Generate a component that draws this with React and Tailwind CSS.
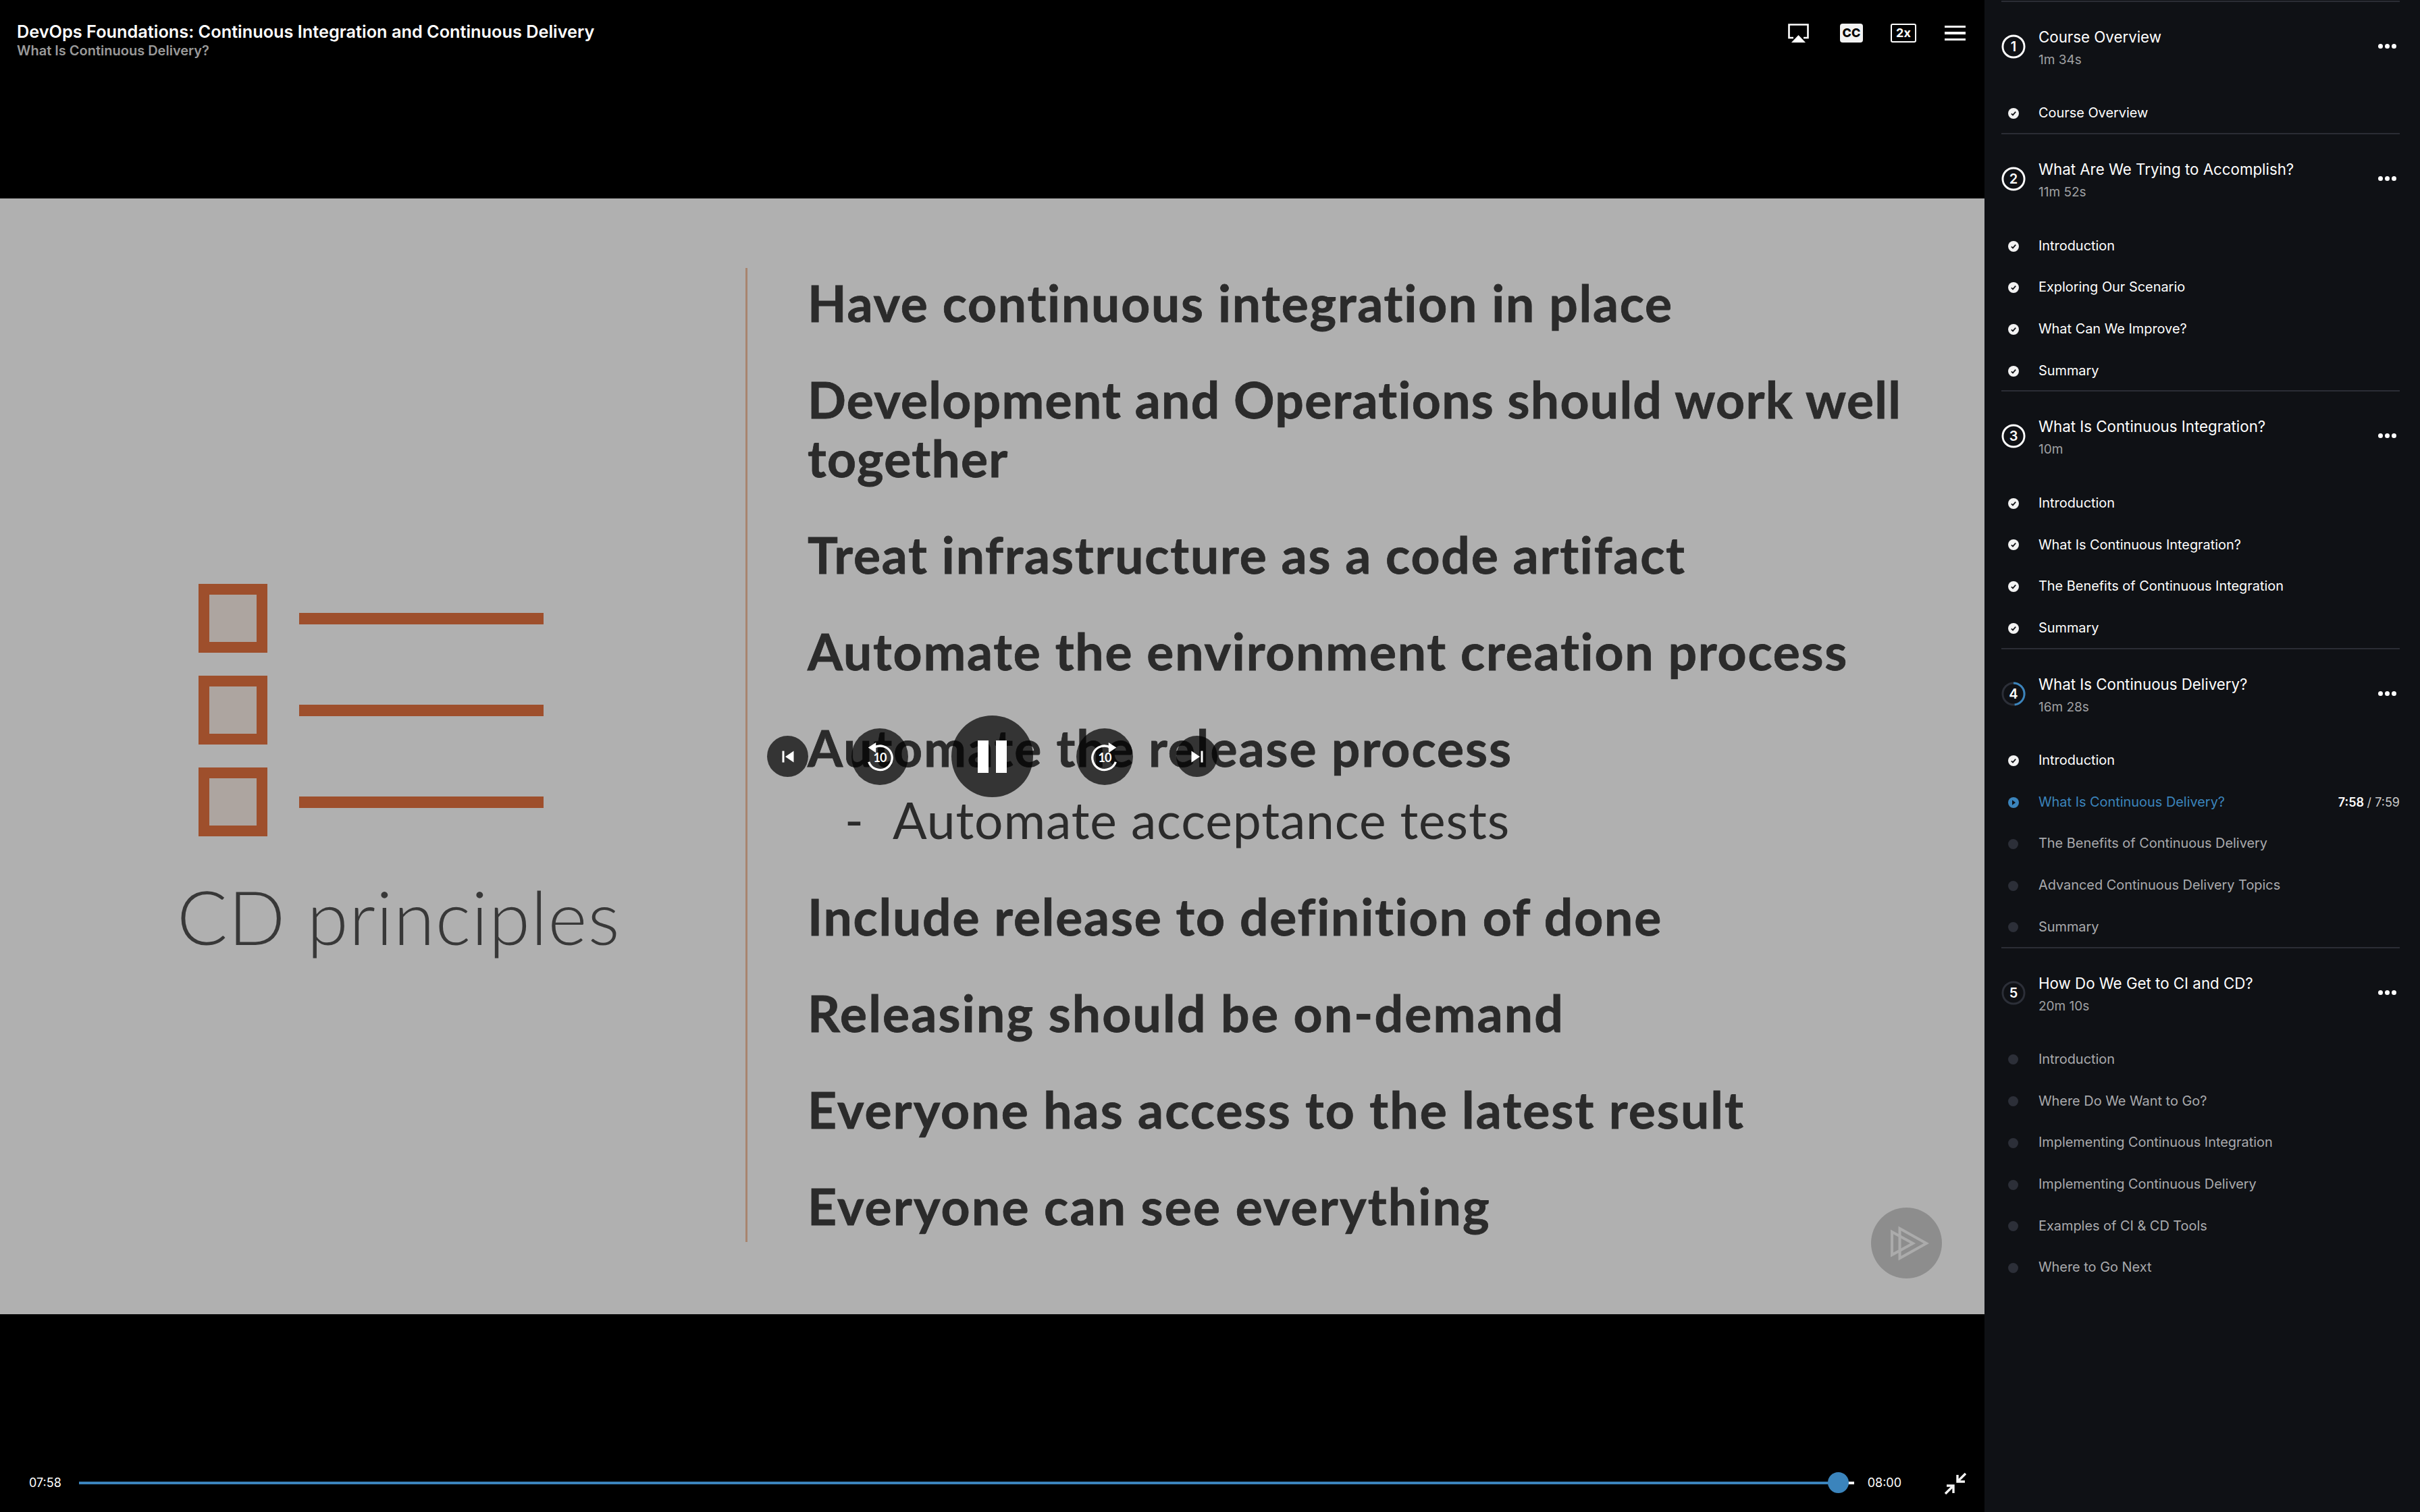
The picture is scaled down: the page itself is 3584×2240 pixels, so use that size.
import React from 'react';

const sections = [
  { n: 1, title: 'Course Overview', time: '1m 34s', lessons: [['Course Overview', 'done']] },
  {
    n: 2,
    title: 'What Are We Trying to Accomplish?',
    time: '11m 52s',
    lessons: [['Introduction', 'done'], ['Exploring Our Scenario', 'done'], ['What Can We Improve?', 'done'], ['Summary', 'done']],
  },
  {
    n: 3,
    title: 'What Is Continuous Integration?',
    time: '10m',
    lessons: [['Introduction', 'done'], ['What Is Continuous Integration?', 'done'], ['The Benefits of Continuous Integration', 'done'], ['Summary', 'done']],
  },
  {
    n: 4,
    title: 'What Is Continuous Delivery?',
    time: '16m 28s',
    progress: 0.48,
    lessons: [['Introduction', 'done'], ['What Is Continuous Delivery?', 'active'], ['The Benefits of Continuous Delivery', 'todo'], ['Advanced Continuous Delivery Topics', 'todo'], ['Summary', 'todo']],
  },
  {
    n: 5,
    title: 'How Do We Get to CI and CD?',
    time: '20m 10s',
    progress: 0,
    lessons: [['Introduction', 'todo'], ['Where Do We Want to Go?', 'todo'], ['Implementing Continuous Integration', 'todo'], ['Implementing Continuous Delivery', 'todo'], ['Examples of CI & CD Tools', 'todo'], ['Where to Go Next', 'todo']],
  },
];

function Ring({ n, progress }) {
  const c = 2 * Math.PI * 16.5;
  const hasTrack = progress !== undefined;
  return (
    <div className="relative flex h-[36px] w-[36px] shrink-0 items-center justify-center text-[20px] font-semibold text-white">
      <svg viewBox="0 0 37 37" className="absolute inset-0 h-full w-full -rotate-90">
        <circle cx="18.5" cy="18.5" r="16.5" fill="none" strokeWidth="3" stroke={hasTrack ? '#2c2f38' : '#ffffff'} />
        {progress > 0 && (
          <circle cx="18.5" cy="18.5" r="16.5" fill="none" strokeWidth="3" stroke="#3b84bc" strokeDasharray={`${c * progress} ${c}`} />
        )}
      </svg>
      {n}
    </div>
  );
}

function Bullet({ state }) {
  if (state === 'todo') return <div className="h-[15px] w-[15px] rounded-full bg-[#2c2f38]" />;
  if (state === 'active') {
    return (
      <svg viewBox="0 0 16 16" className="h-4 w-4">
        <circle cx="8" cy="8" r="8" fill="#3b84bc" />
        <path d="M6 4.2 L11 8 L6 11.8 Z" fill="#0f1115" />
      </svg>
    );
  }
  return (
    <svg viewBox="0 0 16 16" className="h-4 w-4">
      <circle cx="8" cy="8" r="8" fill="#f2f2f2" />
      <path d="M4.8 8.3 L7 10.4 L11.2 5.6" fill="none" stroke="#0f1115" strokeWidth="1.7" />
    </svg>
  );
}

function Lesson({ title, state }) {
  const color = state === 'done' ? 'text-white' : state === 'active' ? 'text-[#3b84bc]' : 'text-[#a9aaad]';
  return (
    <div className="flex h-[61.7px] items-center">
      <div className="mr-[20px] flex w-[35px] shrink-0 justify-center">
        <Bullet state={state} />
      </div>
      <span className={`text-[19.9px] font-normal ${color}`}>{title}</span>
      {state === 'active' && (
        <span className="ml-auto text-[18px] font-semibold text-white">
          7:58 <span className="font-normal text-[#c9c9c9]">/ 7:59</span>
        </span>
      )}
    </div>
  );
}

function Section({ section }) {
  return (
    <div className="-mb-[2px] border-t-2 border-[#2b2d35]">
      <div className="flex h-[134.5px] items-start pt-[48px]">
        <Ring n={section.n} progress={section.progress} />
        <div className="-mt-[11px] ml-[19px] flex-1">
          <div className="text-[22.3px] leading-[30px] font-normal text-white">{section.title}</div>
          <div className="mt-[7px] text-[19px] leading-[24px] text-[#a0a1a4]">{section.time}</div>
        </div>
        <div className="mt-[14px] mr-[5px] flex gap-[3px]">
          <div className="h-[7px] w-[7px] rounded-full bg-white" />
          <div className="h-[7px] w-[7px] rounded-full bg-white" />
          <div className="h-[7px] w-[7px] rounded-full bg-white" />
        </div>
      </div>
      {section.lessons.map(([title, state]) => (
        <Lesson key={title} title={title} state={state} />
      ))}
    </div>
  );
}

function SkipIcon({ flip }) {
  return (
    <svg viewBox="0 0 18 18" className={`h-[18px] w-[18px] ${flip ? '-scale-x-100' : ''}`} fill="#ffffff">
      <rect x="0.5" y="0.5" width="3" height="17" />
      <path d="M17.5 0.5 V17.5 L5 9 Z" />
    </svg>
  );
}

function SeekIcon({ flip }) {
  return (
    <div className="relative flex h-[48px] w-[48px] items-center justify-center">
      <svg viewBox="0 0 50 50" className={`absolute inset-0 h-full w-full ${flip ? '-scale-x-100' : ''}`} fill="none">
        <path d="M16 11 A18.5 18.5 0 1 1 8 33" stroke="#ffffff" strokeWidth="3.4" />
        <path d="M19 3 L19 19 L7 11 Z" fill="#ffffff" />
      </svg>
      <span className="mt-[3px] text-[18px] font-bold tracking-[-1px] text-white">10</span>
    </div>
  );
}

function Slide() {
  return (
    <div className="relative flex h-[1653px] bg-[#b0b0b0] font-['Lato',sans-serif] text-[#2b2b2b]">
      <div className="flex w-[1104px] shrink-0 flex-col pt-[571px] pl-[294px]">
        {[0, 1, 2].map((i) => (
          <div key={i} className="mb-[34px] flex items-center">
            <div className="h-[102px] w-[102px] border-[16px] border-[#9e4f2c] bg-[#ada5a0]" />
            <div className="ml-[47px] h-[17px] w-[362px] bg-[#9e4f2c]" />
          </div>
        ))}
        <div className="-ml-[32px] mt-[19px] text-[111px] leading-[130px] font-light tracking-[1px] whitespace-nowrap text-[#383838]">CD principles</div>
      </div>
      <div className="mt-[103px] h-[1443px] w-[3px] shrink-0 bg-[#a8846e]" />
      <div className="flex flex-col gap-[56px] pt-[111px] pl-[89px] text-[75px] leading-[87px] font-bold tracking-[1.8px] [-webkit-text-stroke:0.8px_#2b2b2b]">
        <div>Have continuous integration in place</div>
        <div className="w-[1680px] tracking-[1.3px]">Development and Operations should work well together</div>
        <div>Treat infrastructure as a code artifact</div>
        <div>Automate the environment creation process</div>
        <div>
          <div className="tracking-[2px]">Automate the release process</div>
          <div className="mt-[20px] flex font-normal tracking-[0.9px] [-webkit-text-stroke:0]">
            <span className="w-[126px] pl-[55px]">-</span>
            <span>Automate acceptance tests</span>
          </div>
        </div>
        <div>Include release to definition of done</div>
        <div className="tracking-[2.2px]">Releasing should be on-demand</div>
        <div className="tracking-[2.1px]">Everyone has access to the latest result</div>
        <div className="tracking-[2.2px]">Everyone can see everything</div>
      </div>

      <div className="absolute inset-0 flex items-center justify-center gap-[64px]">
        <div className="flex h-[61px] w-[61px] items-center justify-center rounded-full bg-black/70">
          <SkipIcon />
        </div>
        <div className="flex h-[84px] w-[84px] items-center justify-center rounded-full bg-black/70">
          <SeekIcon />
        </div>
        <div className="flex h-[121px] w-[121px] items-center justify-center gap-[11px] rounded-full bg-black/70">
          <div className="h-[48px] w-[16px] bg-white" />
          <div className="h-[48px] w-[16px] bg-white" />
        </div>
        <div className="flex h-[84px] w-[84px] items-center justify-center rounded-full bg-black/70">
          <SeekIcon flip />
        </div>
        <div className="flex h-[61px] w-[61px] items-center justify-center rounded-full bg-black/70">
          <SkipIcon flip />
        </div>
      </div>

      <div className="absolute right-[63px] bottom-[53px] flex h-[105px] w-[105px] items-center justify-center rounded-full bg-[#8d8d8d]">
        <svg viewBox="0 0 57 52" className="ml-[9px] h-[52px] w-[57px]" fill="none" stroke="#ababab" strokeWidth="4">
          <path d="M13.5 4 L53 26 L13.5 48 Z" />
          <path d="M2 9 L33 26 L2 43 Z" />
        </svg>
      </div>
    </div>
  );
}

export default function App() {
  return (
    <div className="flex h-[2240px] w-[3584px] overflow-hidden bg-black font-['Inter',sans-serif]">
      <div className="flex w-[2939px] shrink-0 flex-col">
        <div className="flex h-[294px] items-start justify-between pt-[32px] pr-[28px] pl-[25px]">
          <div>
            <div className="text-[25.3px] leading-[30px] font-semibold text-white">DevOps Foundations: Continuous Integration and Continuous Delivery</div>
            <div className="text-[20px] leading-[26px] font-semibold text-[#9a9a9a]">What Is Continuous Delivery?</div>
          </div>
          <div className="flex items-center pt-[3px]">
            <svg viewBox="0 0 31 28" className="h-[28px] w-[31px]">
              <path d="M8 21 H1.5 V1.5 H29.5 V21 H23" fill="none" stroke="#ffffff" strokeWidth="2.6" />
              <path d="M15.5 17 L26 28 H5 Z" fill="#ffffff" />
            </svg>
            <div className="ml-[46px] flex h-[28px] w-[34px] items-center justify-center rounded-[4px] bg-[#f2f2f2] text-[18px] leading-none font-extrabold text-black">CC</div>
            <div className="ml-[41px] flex h-[28px] w-[38px] items-center justify-center rounded-[3px] border-2 border-white text-[18px] leading-none font-bold text-white">2x</div>
            <div className="ml-[42px] flex w-[31px] flex-col gap-[6px]">
              <div className="h-[3.5px] bg-white" />
              <div className="h-[3.5px] bg-white" />
              <div className="h-[3.5px] bg-white" />
            </div>
          </div>
        </div>
        <Slide />
        <div className="flex flex-1 items-start pt-[238px] pr-[27px] pl-[43px]">
          <span className="w-[74px] text-[18px] leading-[24px] text-white">07:58</span>
          <div className="relative mt-[10px] flex h-[4px] w-[2631px] bg-white">
            <div className="h-full w-[2606px] bg-[#3b84bc]" />
            <div className="absolute top-[-14px] left-[2590px] h-[31px] w-[31px] rounded-full bg-[#3b84bc]" />
          </div>
          <span className="ml-[20px] text-[18px] leading-[24px] text-white">08:00</span>
          <svg viewBox="0 0 32 32" className="mt-[-3px] ml-[64px] h-[32px] w-[32px]" fill="none" stroke="#f2f2f2" strokeWidth="3.4">
            <path d="M31 1 L19 13 M19 3 V13 H30" />
            <path d="M1 31 L13 19 M3 19 H13 V30" />
          </svg>
        </div>
      </div>
      <div className="flex-1 bg-[#0f1115] pt-px pr-[30px] pl-[25px]">
        {sections.map((s) => (
          <Section key={s.n} section={s} />
        ))}
      </div>
    </div>
  );
}
